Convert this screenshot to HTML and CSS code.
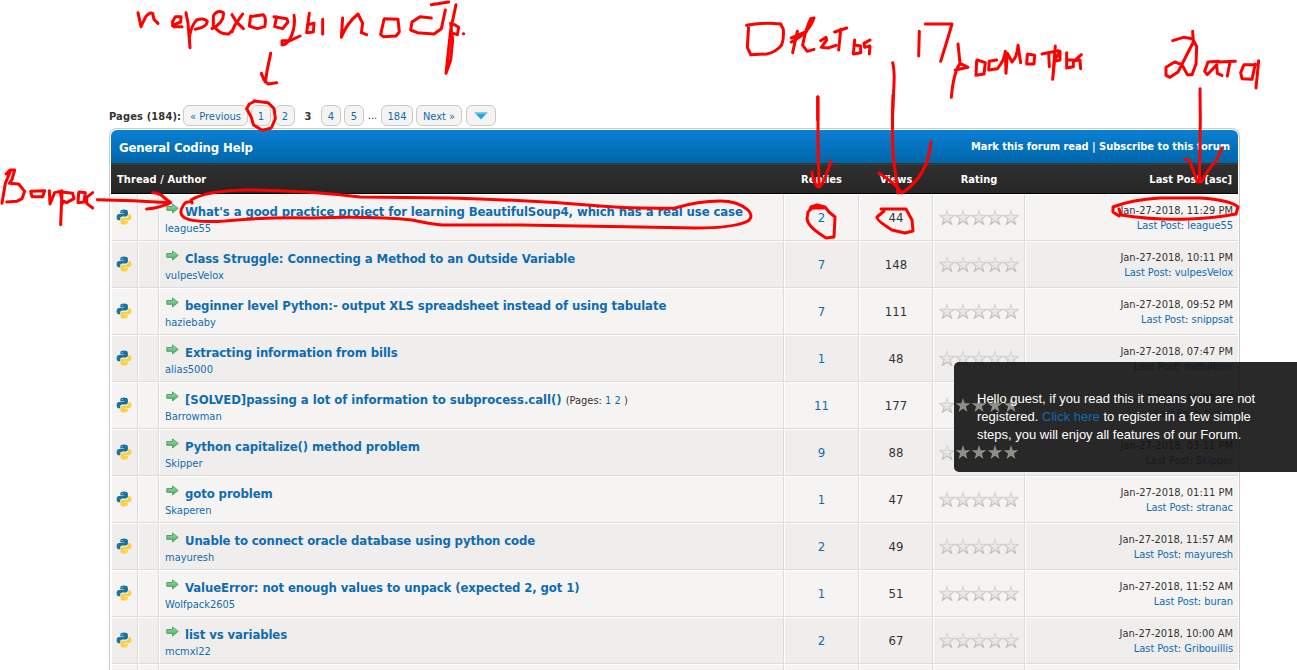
FILE: index.html
```html
<!DOCTYPE html>
<html lang="en">
<head>
<meta charset="utf-8">
<title>General Coding Help</title>
<link rel="stylesheet" href="styles.css">
</head>
<body>
<svg class="defs" width="0" height="0">
  <defs>
    <linearGradient id="gb" x1="0" y1="0" x2="1" y2="1"><stop offset="0" stop-color="#2a7ba8"/><stop offset="1" stop-color="#0a6a98"/></linearGradient>
    <linearGradient id="gs" x1="0" y1="0" x2="0" y2="1"><stop offset="0" stop-color="#e0dfdd"/><stop offset="1" stop-color="#bfbdb9"/></linearGradient>
    <linearGradient id="gf" x1="0" y1="0" x2="0" y2="1"><stop offset="0" stop-color="#f4f3f1"/><stop offset="1" stop-color="#dedddb"/></linearGradient>
    <linearGradient id="ga" x1="0" y1="0" x2="0" y2="1"><stop offset="0" stop-color="#9fdcab"/><stop offset="1" stop-color="#3fae5e"/></linearGradient>
    <symbol id="py" viewBox="0 0 16 16">
      <path fill="url(#gb)" d="M7.800.6C5.200.6 4.300 1.500 4.300 2.800V4.400H8.200V5H3C1.400 5 .6 6.300.6 8.200S1.500 11.300 2.800 11.300H4.200V9.600C4.200 8.300 5.200 7.400 6.400 7.400H9.800C10.900 7.400 11.900 6.600 11.900 5.500V2.800C11.900 1.400 10.300.6 7.800.6Z"/>
      <path fill="#fecf3c" d="M8.400 15.600C11 15.600 11.900 14.700 11.900 13.500V11.900H8V11.200H13.100C14.700 11.200 15.500 9.900 15.500 8.100S14.700 4.900 13.300 4.900H12.400V6.500C12.400 7.800 11.200 8.700 10 8.700H6.500C5.400 8.700 4.500 9.500 4.500 10.600V13.400C4.500 14.800 5.900 15.600 8.400 15.600Z"/>
      <circle cx="6.200" cy="2.500" r=".5" fill="#cfe2ec"/><circle cx="10" cy="13.700" r=".5" fill="#fff3c8"/>
    </symbol>
    <symbol id="go" viewBox="0 0 13 11">
      <path fill="url(#ga)" stroke="#55a06c" stroke-width="1" d="M.8 3.500H6.500V.9L12.200 5.400 6.500 9.900V7.300H.8Z"/>
    </symbol>
    <symbol id="st" viewBox="0 0 16 16">
      <path fill="url(#gf)" stroke="url(#gs)" stroke-width="1.200" d="M8 .9 9.600 6.300H15.500L10.900 9.700 12.600 15.200 8 12.300 3.400 15.200 5.100 9.700.5 6.300H6.400Z"/>
    </symbol>
    <symbol id="stars" viewBox="0 0 80 16">
      <use href="#st" width="16" height="16"/><use href="#st" x="16" width="16" height="16"/><use href="#st" x="32" width="16" height="16"/><use href="#st" x="48" width="16" height="16"/><use href="#st" x="64" width="16" height="16"/>
    </symbol>
  </defs>
</svg>

<nav class="pages">
  <b class="pages-label">Pages (184):</b>
  <a class="pg prev">« Previous</a><a class="pg one">1</a><a class="pg two">2</a><b class="cur">3</b><a class="pg">4</a><a class="pg">5</a><span class="dots">...</span><a class="pg last">184</a><a class="pg next">Next »</a><a class="pg jump"><svg width="14" height="8" viewBox="0 0 14 8"><path d="M.5.5H13.500L7 7.500Z" fill="#22a5e2"/><path d="M.5.5H13.500L12 2H2Z" fill="#6cc8f0"/></svg></a>
</nav>

<main class="forum">
  <header class="head"><b class="name">General Coding Help</b><b class="tools">Mark this forum read | Subscribe to this forum</b></header>
  <div class="cols"><b class="c-thread">Thread / Author</b><b>Replies</b><b>Views</b><b>Rating</b><b class="c-last">Last Post [asc]</b></div>

  <div class="row"><i><svg class="py"><use href="#py"/></svg></i><i></i><div class="thread"><div class="t"><svg class="go"><use href="#go"/></svg><a>What's a good practice project for learning BeautifulSoup4, which has a real use case</a></div><a class="by">league55</a></div><div class="n"><a>2</a></div><div class="n">44</div><div class="r"><svg class="stars"><use href="#stars"/></svg></div><div class="l"><span>Jan-27-2018, 11:29 PM</span><span><a>Last Post</a>: <a>league55</a></span></div></div>
  <div class="row"><i><svg class="py"><use href="#py"/></svg></i><i></i><div class="thread"><div class="t"><svg class="go"><use href="#go"/></svg><a>Class Struggle: Connecting a Method to an Outside Variable</a></div><a class="by">vulpesVelox</a></div><div class="n"><a>7</a></div><div class="n">148</div><div class="r"><svg class="stars"><use href="#stars"/></svg></div><div class="l"><span>Jan-27-2018, 10:11 PM</span><span><a>Last Post</a>: <a>vulpesVelox</a></span></div></div>
  <div class="row"><i><svg class="py"><use href="#py"/></svg></i><i></i><div class="thread"><div class="t"><svg class="go"><use href="#go"/></svg><a>beginner level Python:- output XLS spreadsheet instead of using tabulate</a></div><a class="by">haziebaby</a></div><div class="n"><a>7</a></div><div class="n">111</div><div class="r"><svg class="stars"><use href="#stars"/></svg></div><div class="l"><span>Jan-27-2018, 09:52 PM</span><span><a>Last Post</a>: <a>snippsat</a></span></div></div>
  <div class="row"><i><svg class="py"><use href="#py"/></svg></i><i></i><div class="thread"><div class="t"><svg class="go"><use href="#go"/></svg><a>Extracting information from bills</a></div><a class="by">alias5000</a></div><div class="n"><a>1</a></div><div class="n">48</div><div class="r"><svg class="stars"><use href="#stars"/></svg></div><div class="l"><span>Jan-27-2018, 07:47 PM</span><span><a>Last Post</a>: <a>metulburr</a></span></div></div>
  <div class="row"><i><svg class="py"><use href="#py"/></svg></i><i></i><div class="thread"><div class="t"><svg class="go"><use href="#go"/></svg><a class="solved">[SOLVED]passing a lot of information to subprocess.call()</a><small>(Pages: <a>1</a> <a>2</a> )</small></div><a class="by">Barrowman</a></div><div class="n"><a>11</a></div><div class="n">177</div><div class="r"><svg class="stars"><use href="#stars"/></svg></div><div class="l"><span>Jan-27-2018, 05:03 PM</span><span><a>Last Post</a>: <a>buran</a></span></div></div>
  <div class="row"><i><svg class="py"><use href="#py"/></svg></i><i></i><div class="thread"><div class="t"><svg class="go"><use href="#go"/></svg><a>Python capitalize() method problem</a></div><a class="by">Skipper</a></div><div class="n"><a>9</a></div><div class="n">88</div><div class="r"><svg class="stars"><use href="#stars"/></svg></div><div class="l"><span>Jan-27-2018, 03:11 PM</span><span><a>Last Post</a>: <a>Skipper</a></span></div></div>
  <div class="row"><i><svg class="py"><use href="#py"/></svg></i><i></i><div class="thread"><div class="t"><svg class="go"><use href="#go"/></svg><a>goto problem</a></div><a class="by">Skaperen</a></div><div class="n"><a>1</a></div><div class="n">47</div><div class="r"><svg class="stars"><use href="#stars"/></svg></div><div class="l"><span>Jan-27-2018, 01:11 PM</span><span><a>Last Post</a>: <a>stranac</a></span></div></div>
  <div class="row"><i><svg class="py"><use href="#py"/></svg></i><i></i><div class="thread"><div class="t"><svg class="go"><use href="#go"/></svg><a>Unable to connect oracle database using python code</a></div><a class="by">mayuresh</a></div><div class="n"><a>2</a></div><div class="n">49</div><div class="r"><svg class="stars"><use href="#stars"/></svg></div><div class="l"><span>Jan-27-2018, 11:57 AM</span><span><a>Last Post</a>: <a>mayuresh</a></span></div></div>
  <div class="row"><i><svg class="py"><use href="#py"/></svg></i><i></i><div class="thread"><div class="t"><svg class="go"><use href="#go"/></svg><a>ValueError: not enough values to unpack (expected 2, got 1)</a></div><a class="by">Wolfpack2605</a></div><div class="n"><a>1</a></div><div class="n">51</div><div class="r"><svg class="stars"><use href="#stars"/></svg></div><div class="l"><span>Jan-27-2018, 11:52 AM</span><span><a>Last Post</a>: <a>buran</a></span></div></div>
  <div class="row"><i><svg class="py"><use href="#py"/></svg></i><i></i><div class="thread"><div class="t"><svg class="go"><use href="#go"/></svg><a>list vs variables</a></div><a class="by">mcmxl22</a></div><div class="n"><a>2</a></div><div class="n">67</div><div class="r"><svg class="stars"><use href="#stars"/></svg></div><div class="l"><span>Jan-27-2018, 10:00 AM</span><span><a>Last Post</a>: <a>Gribouillis</a></span></div></div>
  <div class="row cut"><i></i><i></i><div></div><div></div><div></div><div></div><div></div></div>
</main>

<aside class="notice"><svg class="lit" width="64" height="64" viewBox="0 0 64 64"><defs><path id="s" d="M8 1 9.700 6.200H15.500L10.900 9.600 12.500 15 8 11.800 3.500 15 5.100 9.600.5 6.200H6.300Z"/></defs><use href="#s"/><use href="#s" x="16"/><use href="#s" x="32"/><use href="#s" x="48"/><use href="#s" y="47"/><use href="#s" x="16" y="47"/><use href="#s" x="32" y="47"/><use href="#s" x="48" y="47"/></svg><p>Hello guest, if you read this it means you are not<br>registered. <a>Click here</a> to register in a few simple<br>steps, you will enjoy all features of our Forum.</p></aside>

<svg class="ink" width="1297" height="670" viewBox="0 0 1297 670">
  <!-- page navigation note -->
  <g transform="translate(130 0) scale(.33333)" stroke-width="9">
    <path d="M24 38 33 80 46 52Q58 36 68 40L72 58 84 70M127 76 152 66 153 50 136 50 127 66 131 80 156 80M168 38 174 70 180 143 178 112Q184 76 200 60Q222 52 232 64Q230 82 196 88"/>
    <path d="M246 86Q284 66 280 38Q262 28 250 48L250 76Q268 104 296 102L306 92M306 44 318 64 340 86M338 42 314 76 306 96M362 48 358 78 382 86 404 80Q410 54 400 44L362 50M440 50 434 80 458 86 474 66 470 56 432 50M492 46Q498 84 478 120 466 136 456 134L456 122 480 122 510 108M538 40 530 98M532 74 552 70 550 96 530 98M578 58 578 102"/>
    <path d="M638 54 634 112Q650 70 684 42L698 70 694 98 710 104"/>
    <path d="M762 58 752 104 760 110 798 108 808 96 804 58 764 56M904 54 870 50 846 66 842 90 862 98 912 102 934 86 946 30M904 14 956 6M978 14 962 90 948 220 962 180 968 120 962 70M970 100 982 104 986 82 974 74M1000 101 1001 101"/>
    <path d="M422 160 412 208 406 246M394 220 402 240 414 252 440 248"/>
    <path d="M376 303 358 312 350 326 364 352 370 374 396 391 424 384 436 356 432 326 414 308 372 303"/>
  </g>
  <!-- replies note -->
  <g transform="translate(730 10) scale(.33333)" stroke-width="9">
    <path d="M50 46Q100 36 152 42L160 58Q162 90 154 106 138 126 110 132L62 134 52 112 56 46M184 84 230 64M202 64 188 128M184 96Q236 70 252 24L242 26Q226 60 218 106L232 124 252 118M272 92 288 82 290 90 274 112 294 114 318 106M314 66 350 54M332 58 326 120M374 90 370 132 392 128 392 108 378 106M420 90 402 100 404 112 420 108 418 132"/>
    <path d="M263 260V330M488 158Q494 180 492 220L487 330"/>
    <path d="M568 64 566 138M586 42H666Q652 90 632 154M684 102 690 160Q670 190 664 262M676 180 714 172 690 160M740 152 738 196 762 192 766 158 742 150M800 150 778 154 776 180 802 176Q824 150 826 124L828 190 832 130 846 156Q862 140 864 106L872 158M892 134 890 162 912 162 914 136 894 132M936 132 984 122M956 128 958 170M976 108 968 208 974 150 990 124 990 150 974 154M1010 128 1010 174 1030 170 1030 150 1012 150M1054 134 1034 152 1050 150 1052 176"/>
  </g>
  <path d="M818 97 818 140 819 186M812 172 Q814 186 819 187 824 184 831 161"/>
  <path d="M810 209 811 207 817 205 825 207 829 212 835 217 834 237 826 238 820 234Q808 226 807 219 L808 212 812 208 823 208"/>
  <!-- views -->
  <path d="M893 95Q892 130 893 155L898 193M879 173Q896 184 902 193 Q928 176 931 142"/>
  <path d="M881 209H906L912 220 913 231 905 233 892 230Q876 220 877 217L884 211"/>
  <!-- date note -->
  <g transform="translate(1090 20) scale(.33333)" stroke-width="9">
    <path d="M248 62 280 52 308 56 320 80 318 132 306 164 292 164 276 134 254 126 228 142 228 166 240 172 264 156 310 66 308 34M386 124 354 126 344 154 352 164 380 134 382 160 396 166M386 126 436 124M420 126 412 168M496 134 462 134 452 158 456 176 486 178 496 132M506 122 498 204"/>
    <path d="M330 206 331 300 328 484M284 418Q298 412 304 436L322 486 334 486Q358 440 378 424L396 384"/>
  </g>
  <path d="M1119 216 1113 212 1113 207 Q1130 200 1160 198 H1200Q1230 200 1238 207L1236 214Q1216 218 1190 219 1150 220 1121 215L1119 209"/>
  <!-- question note -->
  <g transform="translate(0 160) scale(.33333)" stroke-width="9">
    <path d="M30 36 16 70 6 130M18 42 30 30 44 30M44 30 36 58 28 70 56 72 74 94 66 116 50 124 20 126M94 94 134 92 128 110 96 110 92 94M148 92 150 132 164 98 180 94 188 130M186 92 182 194 186 96 218 100 222 116 200 128 192 124M236 98 234 128 252 126 256 98 238 96M278 98 260 112 260 130 278 144"/>
    <path d="M292 119 400 122 508 128M458 98Q480 98 494 114L512 128Q480 144 440 147"/>
  </g>
  <path d="M192 202Q185 201 183 206 178 214 185 218 195 223 225 221 265 217 310 218 375 216 412 220 430 224 442 225H520L640 227 695 228Q734 228 748 221 754 216 748 210 738 201 720 201 698 201 675 208 640 209 600 206 530 200 450 198L360 197Q300 190 245 190 205 191 191 200L192 203"/>
</svg>
</body>
</html>
```
FILE: styles.css
```css
html{overflow:hidden}
body{margin:0;width:1297px;height:670px;overflow:hidden;position:relative;background:#fff;color:#333;font:11px "DejaVu Sans Condensed","DejaVu Sans",sans-serif;font-stretch:condensed}
a{color:#0f6cb0}
.defs{position:absolute}
.pages{display:flex;align-items:center;height:23px;padding:104px 0 1px 109px}
.pages-label{width:74px;white-space:nowrap;letter-spacing:.15px;padding-top:1px}
.pg{box-sizing:border-box;height:21px;border:1px solid #cbc9c4;border-radius:6px;background:#f5f4f2;display:flex;align-items:center;justify-content:center;width:20px;margin-right:3px;padding-top:1px}
.prev{width:65px}
.one{margin-right:4px}
.cur{width:20px;margin-right:3px;text-align:center;padding-top:1px}
.dots{width:11px;margin-right:3px;text-align:center}
.last{width:32px}
.next{width:46px;margin-right:4px}
.jump{width:30px;padding-top:0}
.forum{width:1127px;height:540px;overflow:hidden;margin-left:109px;border:1px solid #cccac6;border-bottom:0;padding:1px 1px 0;border-radius:8px 8px 0 0}
.head{height:34px;box-sizing:border-box;border-bottom:1px solid #263c38;border-radius:6px 6px 0 0;background:linear-gradient(#0a80d4,#0066a9);color:#fff;display:flex;align-items:center;justify-content:space-between;padding:0 8px}
.name{font-size:13px;letter-spacing:-.08px;padding-top:1px}
.tools{font-size:11px;letter-spacing:-.02px}
.cols{display:grid;grid-template-columns:673px 75px 74px 92px 213px;align-items:center;height:30px;box-sizing:border-box;border-bottom:1px solid #000;border-top:1px solid #3a3a3a;background:linear-gradient(#303030,#262626);color:#fff;text-align:center;padding-top:1px}
.c-thread{text-align:left;padding-left:6px;letter-spacing:.1px}
.c-last{text-align:right;padding-right:6px}
.row{display:grid;grid-template-columns:27px 21px 625px 75px 74px 92px 213px;height:47px;background:#f5f4f2}
.row:nth-child(even){background:#efeeed}
.row>*{box-sizing:border-box;border:1px solid;border-color:#fff #dcdbd9 #dcdbd9 #fff;display:flex;align-items:center;justify-content:center}
.row>*:last-child{border-right:0}
.row.cut{height:12px}
.py{width:16px;height:16px;margin:-1px 2px 0 0}
.row .thread{flex-direction:column;align-items:flex-start;padding:4px 0 0 5px}
.t{display:flex;align-items:baseline;font-size:13px;font-weight:bold;height:18px;line-height:18px;white-space:nowrap;letter-spacing:-.1px}
.solved{letter-spacing:-.04px}
.go{width:13px;height:11px;margin-right:6px;align-self:flex-start;margin-left:1px}
.t small{font-size:11px;font-weight:normal;margin-left:4px;letter-spacing:0}
.by{line-height:16px}
.n{font-size:13px}
.stars{width:80px;height:16px;margin-top:-2px}
.row .l{flex-direction:column;align-items:flex-end;line-height:15px;padding-right:5px}
.l a{letter-spacing:-.05px}
.notice{position:absolute;left:954px;top:362px;width:343px;height:110px;border-radius:5px 0 0 5px;background:rgba(20,20,20,.91);color:#fff;font:13px/18px "Liberation Sans",Arial,sans-serif}
.notice p{margin:28px 0 0 23px;position:relative;white-space:nowrap}
.lit{position:absolute;left:1px;top:35px;fill:#918e88}
.ink{position:absolute;left:0;top:0;fill:none;stroke:#f00;stroke-width:3;stroke-linecap:round;stroke-linejoin:round;pointer-events:none}
```
